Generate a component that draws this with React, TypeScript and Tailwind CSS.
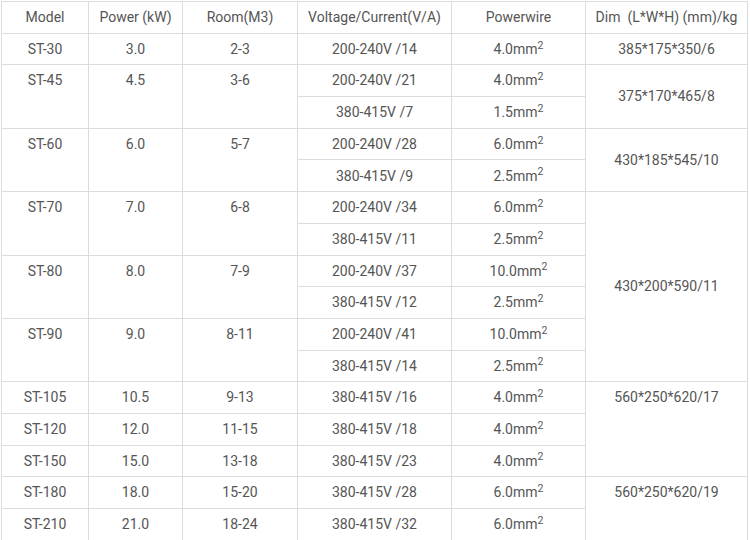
import React from "react";

type Cell = { t: React.ReactNode; rs?: number; top?: boolean };

const mm = (v: string) => (
  <>
    {v}mm<sup>2</sup>
  </>
);

const rows: Cell[][] = [
  [{ t: "ST-30" }, { t: "3.0" }, { t: "2-3" }, { t: "200-240V /14" }, { t: mm("4.0") }, { t: "385*175*350/6" }],
  [{ t: "ST-45", rs: 2, top: true }, { t: "4.5", rs: 2, top: true }, { t: "3-6", rs: 2, top: true }, { t: "200-240V /21" }, { t: mm("4.0") }, { t: "375*170*465/8", rs: 2 }],
  [{ t: "380-415V /7" }, { t: mm("1.5") }],
  [{ t: "ST-60", rs: 2, top: true }, { t: "6.0", rs: 2, top: true }, { t: "5-7", rs: 2, top: true }, { t: "200-240V /28" }, { t: mm("6.0") }, { t: "430*185*545/10", rs: 2 }],
  [{ t: "380-415V /9" }, { t: mm("2.5") }],
  [{ t: "ST-70", rs: 2, top: true }, { t: "7.0", rs: 2, top: true }, { t: "6-8", rs: 2, top: true }, { t: "200-240V /34" }, { t: mm("6.0") }, { t: "430*200*590/11", rs: 6 }],
  [{ t: "380-415V /11" }, { t: mm("2.5") }],
  [{ t: "ST-80", rs: 2, top: true }, { t: "8.0", rs: 2, top: true }, { t: "7-9", rs: 2, top: true }, { t: "200-240V /37" }, { t: mm("10.0") }],
  [{ t: "380-415V /12" }, { t: mm("2.5") }],
  [{ t: "ST-90", rs: 2, top: true }, { t: "9.0", rs: 2, top: true }, { t: "8-11", rs: 2, top: true }, { t: "200-240V /41" }, { t: mm("10.0") }],
  [{ t: "380-415V /14" }, { t: mm("2.5") }],
  [{ t: "ST-105" }, { t: "10.5" }, { t: "9-13" }, { t: "380-415V /16" }, { t: mm("4.0") }, { t: "560*250*620/17", rs: 3, top: true }],
  [{ t: "ST-120" }, { t: "12.0" }, { t: "11-15" }, { t: "380-415V /18" }, { t: mm("4.0") }],
  [{ t: "ST-150" }, { t: "15.0" }, { t: "13-18" }, { t: "380-415V /23" }, { t: mm("4.0") }],
  [{ t: "ST-180" }, { t: "18.0" }, { t: "15-20" }, { t: "380-415V /28" }, { t: mm("6.0") }, { t: "560*250*620/19", rs: 2, top: true }],
  [{ t: "ST-210" }, { t: "21.0" }, { t: "18-24" }, { t: "380-415V /32" }, { t: mm("6.0") }],
];

const headers = ["Model", "Power (kW)", "Room(M3)", "Voltage/Current(V/A)", "Powerwire", "Dim\u00a0\u00a0(L*W*H) (mm)/kg"];
const widths = ["w-[87px]", "w-[94px]", "w-[115px]", "w-[154px]", "w-[134px]", "w-[162px]"];

export default function App() {
  return (
    <div className="w-[750px] h-[540px] overflow-hidden bg-white pt-px pl-px">
      <table
        className="table-fixed border-collapse w-[747px] text-[14px] text-[#555] border border-[#d6d6d6]"
        style={{ fontFamily: "Roboto, 'Liberation Sans', sans-serif" }}
      >
        <colgroup>
          {widths.map((w, i) => (
            <col key={i} className={w} />
          ))}
        </colgroup>
        <thead>
          <tr>
            {headers.map((h, i) => (
              <th
                key={i}
                className="h-[31.7px] p-0 font-normal text-center align-middle border border-[#dcdcdc] leading-[30.5px] whitespace-nowrap"
              >
                {h}
              </th>
            ))}
          </tr>
        </thead>
        <tbody>
          {rows.map((r, ri) => (
            <tr key={ri}>
              {r.map((c, ci) => (
                <td
                  key={ci}
                  rowSpan={c.rs}
                  className={`h-[31.7px] p-0 text-center border border-[#dcdcdc] leading-[30.5px] whitespace-nowrap ${c.top ? "align-top" : "align-middle"}`}
                >
                  {c.t}
                </td>
              ))}
            </tr>
          ))}
        </tbody>
      </table>
    </div>
  );
}
